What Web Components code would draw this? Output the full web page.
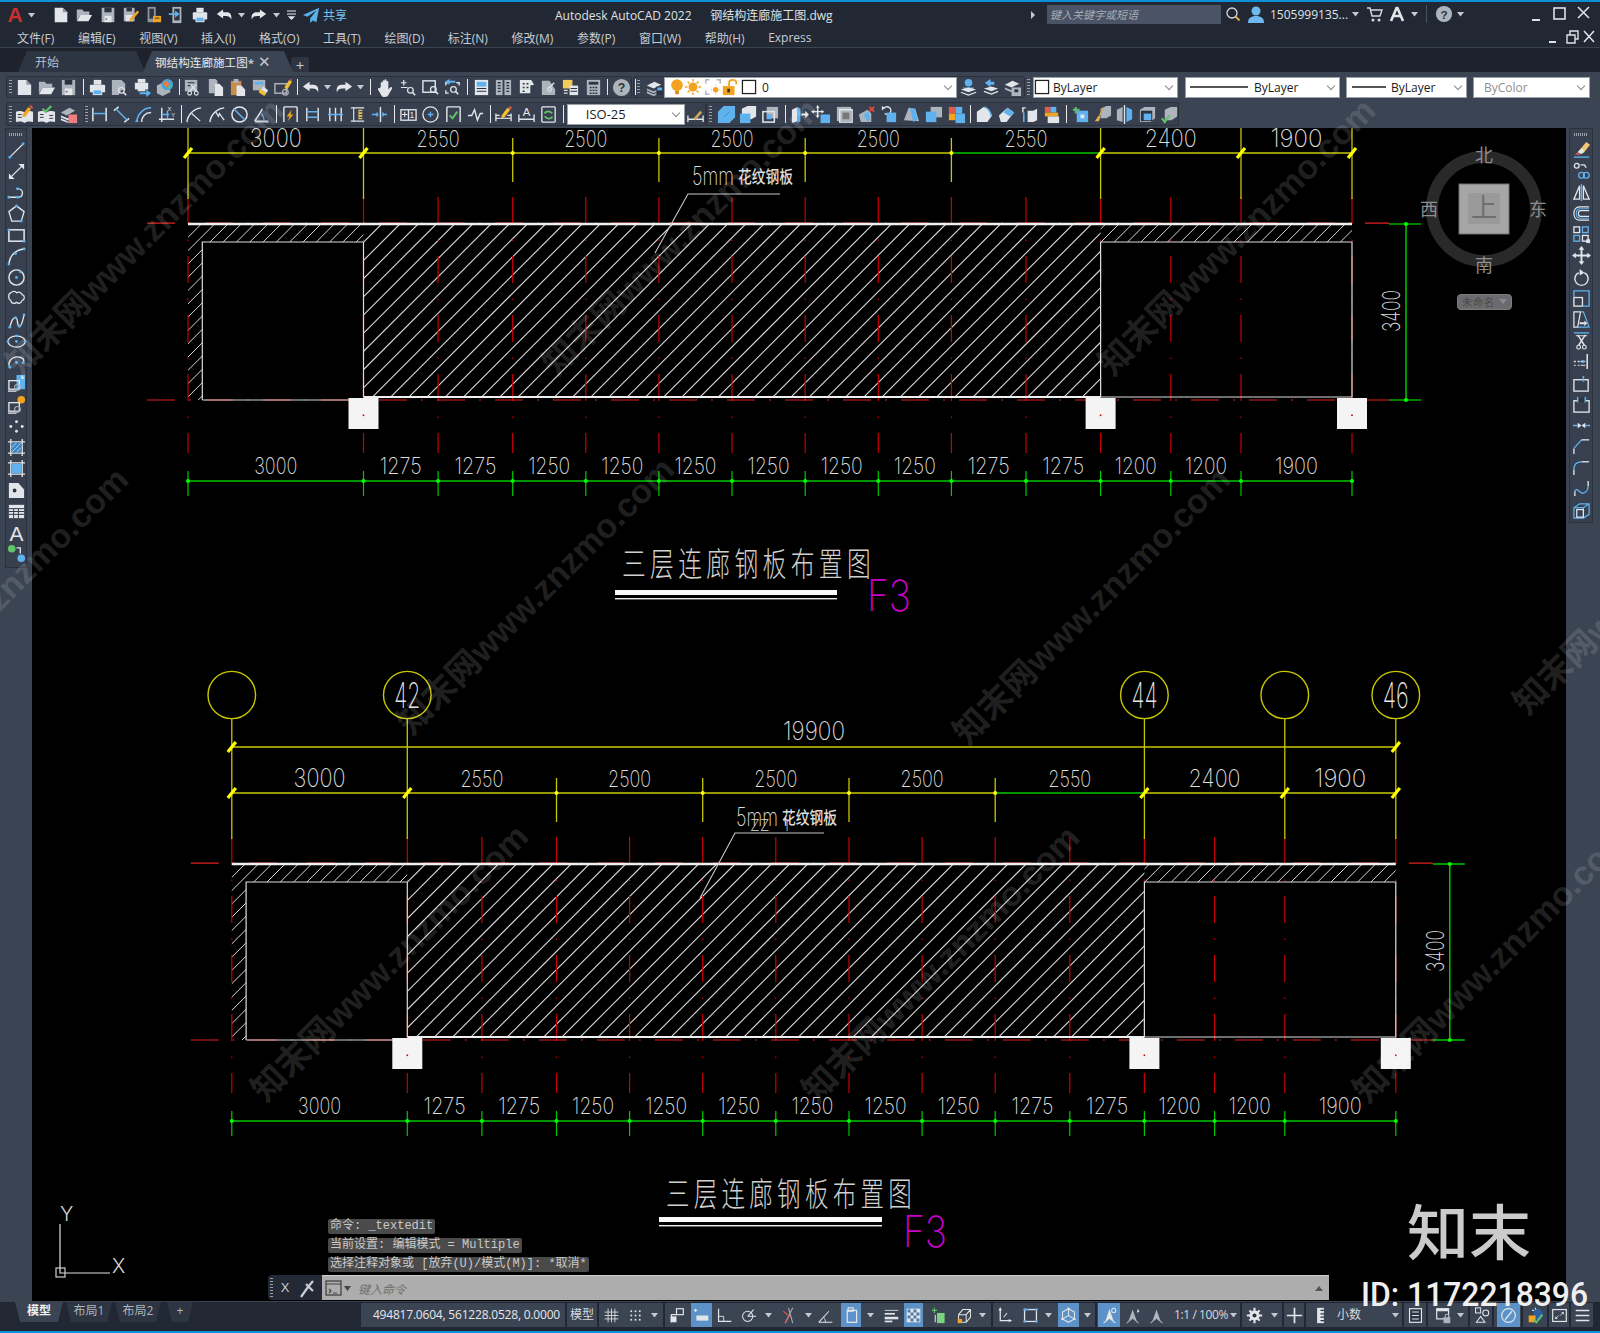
<!DOCTYPE html>
<html lang="zh">
<head>
<meta charset="utf-8">
<title>Autodesk AutoCAD 2022</title>
<style>
  html, body { margin: 0; padding: 0; background: #000; }
  body { width: 1600px; height: 1333px; overflow: hidden; position: relative; display: flex; flex-direction: column; font-family: "Open Sans", "Noto Sans CJK SC", sans-serif; }
</style>
</head>
<body>
<cad-titlebar></cad-titlebar>
<cad-menubar></cad-menubar>
<cad-doctabs></cad-doctabs>
<cad-toolrows></cad-toolrows>
<cad-workspace>
  <cad-vbar slot="left" side="left"></cad-vbar>
  <cad-canvas slot="main">
    <cad-viewcube></cad-viewcube>
    <cad-cmdline></cad-cmdline>
  </cad-canvas>
  <cad-vbar slot="right" side="right"></cad-vbar>
</cad-workspace>
<cad-statusbar></cad-statusbar>
<cad-overlay></cad-overlay>

<script>
// colours used by the toolbar icons
const W = '#e2e5e9', G = '#aeb4bc', B = '#5fb2ee', O = '#f2a31f', K = '#2b3240', R = '#e05a4e', V = '#5fc46a';
const s = (d, c = W, w = 1.4) => `<path d="${d}" fill="none" stroke="${c}" stroke-width="${w}"/>`;
const f = (d, c = W) => `<path d="${d}" fill="${c}"/>`;
const rc = (x, y, w, h, c = W) => `<rect x="${x}" y="${y}" width="${w}" height="${h}" fill="${c}"/>`;
const ro = (x, y, w, h, c = W, t = 1.4) => `<rect x="${x}" y="${y}" width="${w}" height="${h}" fill="none" stroke="${c}" stroke-width="${t}"/>`;
const ci = (x, y, r, c = W, t = 1.4) => `<circle cx="${x}" cy="${y}" r="${r}" fill="none" stroke="${c}" stroke-width="${t}"/>`;
const cf = (x, y, r, c = W) => `<circle cx="${x}" cy="${y}" r="${r}" fill="${c}"/>`;
const mag = (x, y) => ci(x, y, 3, W, 1.3) + s(`M${x + 2} ${y + 2}l3 3`, W, 1.6);
const page = (c = W) => f('M3 2h9l5 5v11H3z', c) + f('M12 2l5 5h-5z', '#8f959e');
const pts = (arr) => arr.map(p => cf(p[0], p[1], 1.5, B)).join('');

const ICONS = {
  new: page(),
  open: f('M2 4h6l2 2h6v4H6l-4 6z', G) + f('M6 10h13l-4 7H2z', W),
  save: rc(3, 2, 14, 16, G) + rc(6, 2, 8, 5, K) + rc(6, 11, 8, 7, W) + rc(7, 14, 2, 1, K),
  saveas: rc(2, 2, 12, 15, G) + rc(5, 2, 6, 4, K) + rc(4, 10, 8, 7, W) + f('M17 5l2 2-8 9-3 1 1-3z', O),
  sheet: rc(4, 1, 9, 17, '#8f959e') + rc(6, 3, 5, 11, K) + rc(10, 11, 9, 7, O) + rc(12, 13, 5, 1, K),
  xfer: rc(6, 1, 10, 18, G) + rc(8, 3, 6, 13, K) + f('M2 8h7V5l5 4-5 4v-3H2z', B),
  print: rc(6, 2, 8, 5, W) + f('M3 7h14a1 1 0 0 1 1 1v7H2V8a1 1 0 0 1 1-1z', W) + rc(5, 12, 10, 6, W) + rc(6, 13, 8, 4, B),
  preview: f('M2 2h10l4 4v7H12l-3 5H2z', G) + mag(12, 13),
  plot: rc(5, 1, 8, 4, W) + rc(2, 5, 14, 7, W) + rc(5, 10, 8, 4, W) + f('M7 15h7v-3l5 4-5 4v-3H7z', B),
  globe: f('M2 8l8-4 6 3v8l-8 4-6-3z', G) + cf(13, 7, 6, '#46a6d8') + f('M10 3c3 0 5 2 5 4l-3 3-3-3z', '#e57c4a') + f('M13 9l4-1-2 4z', V),
  cut: rc(2, 2, 13, 12, G) + s('M5 5h7M5 8h4', K, 1.2) + ci(7, 16, 2, W, 1.2) + ci(14, 16, 2, W, 1.2) + s('M7 14l7-7M14 14L8 7', W, 1.4),
  copy: f('M3 1h7l2 2v4H9v9H3z', G) + f('M9 6h5l4 4v9H9z', W),
  paste: rc(3, 3, 11, 15, '#c78d4c') + rc(6, 1, 5, 4, G) + f('M9 8h5l4 4v7H9z', W),
  match: rc(2, 2, 13, 11, G) + rc(4, 4, 9, 3, B) + f('M10 11l6 5-2 3-6-4z', '#f1c12f') + f('M13 9l5 4-2 3-5-4z', W),
  mgr: ro(2, 6, 12, 10, G, 1.5) + f('M12 10l5-8 3 2-5 8z', '#f1c12f') + f('M17 2l2-1 1 3z', R) + ci(13, 15, 3, G),
  undo: f('M2 9l7-5v3h4c4 0 6 3 5 8-1-3-3-4-6-4H9v3z', W),
  redo: f('M18 9l-7-5v3H7c-4 0-6 3-5 8 1-3 3-4 6-4h3v3z', W),
  pan: f('M5 9V5c0-1 2-1 2 0v4-6c0-1 2-1 2 0v6-7c0-1 2-1 2 0v7-5c0-1 2-1 2 0v8l2-2c1-1 2 0 2 1l-4 7c-1 2-2 2-4 2H9c-2 0-3-1-4-3l-3-5c0-1 1-2 2-1z', W),
  zoomrt: s('M5 2v6M2 5h6M2 10h7', W, 1.3) + mag(12, 13),
  zoomwin: ro(2, 3, 13, 12, W, 1.5) + mag(13, 12),
  zoomprv: s('M3 8V5h3M14 5h3v3M3 13v3h3', W, 1.4) + f('M2 4l5-3v2h6v2H7v2z', B) + mag(11, 12),
  props: rc(3, 2, 14, 16, W) + rc(5, 4, 10, 5, B) + s('M5 11h10M5 14h10', K, 1.2),
  dc: rc(2, 2, 7, 16, G) + rc(11, 2, 7, 16, G) + s('M4 5h3M4 8h3M4 11h3M4 14h3M13 5h3M13 8h3M13 11h3M13 14h3', K, 1.4),
  tools: f('M3 2h12l3 5-4 1v8H3z', W) + s('M6 6h2M10 6h2M6 10h2M10 10h2M6 14h2', K, 1.6),
  sheets: f('M3 3h8l6 9v6H3z', G) + ci(11, 12, 2, W, 1.2) + s('M11 10l5-5', W),
  markup: rc(2, 2, 10, 9, '#f3cb58') + rc(9, 8, 9, 10, W) + s('M10 11h7M10 14h7', K, 1.2) + s('M3 13h4M3 16h4', W, 1.4),
  calc: rc(3, 2, 14, 16, G) + rc(5, 4, 10, 3, K) + s('M6 10h2M9 10h2M12 10h2M6 13h2M9 13h2M12 13h2M6 16h2M9 16h2M12 16h2', K, 1.5),
  help: cf(10, 10, 9, G) + `<text x="10" y="15" font-size="13" font-weight="700" text-anchor="middle" fill="${K}" font-family="Liberation Sans">?</text>`,
  layers: f('M2 8l8-4 7 3-8 4z', W) + f('M2 11l7 3 8-3v2l-8 3-7-3z', G) + f('M2 14l7 3 8-3v2l-8 3-7-3z', G) + rc(12, 9, 7, 9, K) + rc(13, 10, 5, 3, B),
  bulb: cf(10, 8, 6.5, O) + rc(8, 14, 4, 4, '#d88a12'),
  sun: cf(10, 10, 5, O) + s('M10 1v3M10 16v3M1 10h3M16 10h3M4 4l2 2M14 14l2 2M16 4l-2 2M4 16l2-2', O, 1.6),
  vpfrz: s('M2 6V2h4M14 2h4v4M2 14v4h4', G, 1.6) + cf(13, 13, 3, O) + s('M13 8v1M13 17v1M8 13h1M17 13h1', O, 1.2),
  lock: rc(2, 9, 13, 10, O) + s('M9 9V5c0-4 8-4 8 0v2', O, 2) + rc(7, 12, 3, 4, K),
  swatch: rc(2, 2, 16, 16, '#fff') + ro(2.7, 2.7, 14.6, 14.6, '#222', 1.4),
  layuser: cf(10, 5, 4, B) + f('M4 10h12l-2 3H6z', B) + f('M2 12l8 3 8-3-8-2z', W) + s('M2 15l8 3 8-3', W),
  layprev: f('M4 5l6-4v3h4v3h-4v3z', B) + f('M3 11l8 3 7-3-7-2z', W) + s('M3 14l8 3 7-3', W),
  laylock: f('M2 7l8-4 7 3-8 4z', W) + f('M2 10l7 3 8-3v2l-8 3-7-3z', G) + rc(9, 10, 10, 9, G) + rc(12, 12, 4, 3, K),
  annot: f('M1 7c3-1 6-1 9 1 3-2 6-2 9-1v11c-3-1-6-1-9 1-3-2-6-2-9-1z', W) + f('M8 10l6-8 3 2-6 8-3 1z', O) + f('M15 1l2-1 2 3-1 1z', R) + s('M3 10h4M3 13h4', K, 1),
  bookchk: f('M1 7c3-1 6-1 9 1 3-2 6-2 9-1v11c-3-1-6-1-9 1-3-2-6-2-9-1z', W) + s('M3 10h4M3 13h4M13 11h4M13 14h4', K, 1) + s('M6 4l3 3 6-6', V, 2.2),
  stackr: f('M2 8l9-5 6 3-9 5z', G) + f('M2 11l7 3 4-2v2l-4 2-7-3z', W) + rc(10, 10, 9, 9, '#f08080') + f('M2 14l7 3 1 2-8-3z', W),
  dimlin: s('M3 3v14M17 3v14', W, 1.6) + s('M3 9h14', B, 1.6),
  dimali: s('M2 6l5-4M13 18l5-4', W, 1.6) + s('M4 4l12 12', B, 1.6),
  dimarc: s('M3 18C3 10 10 3 18 3', B, 1.6) + s('M8 18C8 12 12 8 18 8', W, 1.6) + f('M1 18h4l-2-3z', B),
  dimord: s('M5 3v15M2 15h16', W, 1.5) + s('M11 6v9M5 10h8', B, 1.5) + `<text x="11" y="6" font-size="6" fill="${W}" font-family="Liberation Sans">X</text><text x="15" y="13" font-size="6" fill="${W}" font-family="Liberation Sans">Y</text>`,
  dimrad: s('M2 18C3 10 9 4 17 3', W, 1.5) + s('M7 9l9 8', W, 1.3),
  dimjog: s('M2 18C3 10 9 4 17 3', W, 1.5) + s('M8 7l3 5 1-3 5 7', W, 1.3),
  dimdia: ci(10, 10, 8, W, 1.6) + s('M4 4l12 12', B, 1.6),
  dimang: s('M3 17h14M3 17L11 4', W, 1.4) + s('M13 17c0-3-1-5-3-8', B, 1.4) + s('M3 18h15', W, .8),
  dimbrk: s('M3 2h14M3 2v16M17 2v16', W, 1.5) + f('M11 5L6 12h3l-2 5 6-7h-3z', O),
  dimbase: s('M4 3v14M16 3v14', W, 1.5) + s('M4 7h12M4 13h12', B, 1.6),
  dimcont: s('M4 3v14M10 3v14M16 3v14', W, 1.5) + s('M2 10h16', B, 1.6),
  dimspc: s('M3 3h14M3 17h14', W, 1.5) + s('M6 3v14', W, 1.2) + rc(11, 5, 4, 10, '#e8c063') + s('M12 7h3M12 10h3M12 13h3', K, 1),
  dimbk2: s('M11 2v16', W, 1.5) + s('M2 10h7M13 10h5', B, 1.6) + f('M8 7v6l-3-3zM13 7v6l3-3z', B),
  tol: ro(2, 5, 16, 11, W, 1.4) + s('M10 5v11', W) + s('M3 10h6M6 7v6', W, 1.2) + `<text x="11" y="14" font-size="9" fill="${W}" font-family="Liberation Sans">1</text>`,
  cent: ci(10, 10, 8, W, 1.4) + s('M7 10h6M10 7v6', B, 1.4),
  insp: s('M3 2h14M3 2v16M17 2v16', W, 1.5) + s('M6 11l3 3 5-7', V, 2),
  jogl: s('M2 11h4l3-6 3 11 3-7h3', W, 1.5),
  ded: s('M2 11h4M14 11h4M2 9v8M18 9v8', W, 1.4) + f('M8 11l6-8 3 2-6 8-3 1z', '#f1c12f') + f('M15 3l2-2 2 2-2 2z', R) + s('M2 14h16', W, 1.2),
  dimtxt: s('M2 10v8M18 10v8M2 15h16', W, 1.4) + `<text x="10" y="12" font-size="12" text-anchor="middle" fill="${W}" font-family="Liberation Sans">A</text>`,
  dimupd: s('M3 2h14M3 2v16M17 2v16M3 18h14', W, 1.4) + s('M6 9c1-3 6-3 8 0M14 12c-1 3-6 3-8 0', V, 1.8),
  dimsty: s('M2 11v7M18 11v7M2 15h16', W, 1.4) + f('M8 14L15 6l2 2-7 8z', '#d0a35c'),
  sol1: f('M1 7l6-6h12v12l-6 6H1z', B) + s('M7 13l6-6', '#3a8fc9', 1),
  sol2: f('M3 4l6-3h9v11l-5 3H3z', W) + f('M1 9h11v10H1z', B),
  sol3: f('M6 2h12v12H6z', G) + ro(2, 7, 12, 11, W, 1.6) + rc(6, 10, 5, 5, B),
  ext: f('M2 5l6-3v15l-6 2z', W) + f('M8 2l3 2v13l-3 2z', B) + f('M12 9h4V6l4 4-4 4v-3h-4z', W),
  movef: s('M6 2v10M1 7h10', W, 1.5) + f('M6 0l2 3H4zM6 14l2-3H4zM-1 7l3-2v4zM13 7l-3-2v4z', W) + rc(9, 10, 10, 9, B),
  offf: rc(2, 2, 15, 15, G) + ro(5, 5, 13, 13, W, 1.6) + rc(8, 8, 7, 7, '#777'),
  delf: f('M2 10l9-5 4 4v9H4z', G) + f('M7 10l5-3 2 8-3 3z', B) + s('M13 2l5 5M18 2l-5 5', '#e24b3f', 2),
  rotf: s('M5 4a4 4 0 1 1 1 5', W, 1.4) + f('M3 1l3 2-3 3z', W) + rc(8, 8, 10, 10, B),
  taper: f('M2 16L7 3l7 1 4 13z', G) + f('M8 3l5 1 4 11-5 3z', B),
  copyf: f('M7 2h12v11H7z', G) + f('M2 7h11v11H2z', B),
  colf: rc(2, 2, 7, 7, R) + rc(9, 2, 7, 7, B) + rc(2, 9, 7, 7, O) + rc(9, 9, 10, 10, B),
  sec1: f('M2 7l7-5 5 2 4 7-5 7H2z', W) + s('M10 2c5 2 7 7 7 10', B, 1.6),
  sec2: f('M2 11L11 3l7 5-8 10H4z', W) + f('M11 3l7 5-4 4-7-4z', B),
  imp: s('M3 8V3h3', W, 1.5) + s('M4 8v10', B, 1.6) + f('M8 6h6l4-2v12l-4 2H8z', W),
  col2: rc(3, 2, 6, 6, R) + rc(9, 2, 6, 6, B) + rc(3, 8, 14, 4, O) + rc(6, 12, 12, 7, W),
  imprint: s('M5 2v7M2 5h7', V, 2) + rc(6, 6, 12, 12, B) + rc(10, 10, 4, 4, W),
  clean: f('M8 4l6-3h5v10l-5 3H8z', G) + f('M6 11l2 1-2 5h-4z', '#e6b34c') + s('M7 11l4-8', '#d0a35c', 1.6),
  sep: f('M2 5l6-3v16l-6-2z', G) + f('M12 2l6 3v10l-6 3z', B) + s('M10 0v20', W),
  shell: f('M2 5l5-3h11v12l-5 4H2z', G) + rc(3, 6, 12, 11, K) + rc(6, 9, 8, 7, B),
  check: f('M5 5l6-3h7v10l-6 4H5z', G) + s('M2 14l3 4 5-7', V, 2.2),
  // left bar
  line: s('M3 17L17 3', W) + pts([[3, 17], [17, 3]]),
  xline: s('M3 17L17 3', W) + f('M18 2v6l-6-6zM2 18v-6l6 6z', W),
  pline: s('M2 15h9c7 0 7-9 0-9', W) + pts([[2, 15], [11, 15], [11, 6]]),
  poly: s('M10 2l8 6-3 10H5L2 8z', W) + pts([[10, 2], [15, 18]]),
  rect: ro(2, 4, 16, 12, W, 1.6) + pts([[2, 4], [18, 16]]),
  arc: s('M2 18C3 9 9 3 18 2', W, 1.6) + pts([[2, 18], [9, 7], [18, 2]]),
  circle: ci(10, 10, 8, W, 1.5) + pts([[10, 10], [14, 4]]),
  cloud: s('M4 4c2-2 5-2 6 0 2-1 5-1 6 2 3 1 3 5 0 6-1 3-4 4-6 2-2 2-6 1-6-2-3-1-3-7 0-8z', W, 1.3),
  spline: s('M3 17c2-7 3-10 6-10s1 9 4 9 4-9 5-12', W) + pts([[3, 17], [9, 7], [13, 16], [18, 4]]),
  ellipse: `<ellipse cx="10" cy="10" rx="9" ry="6" fill="none" stroke="${W}" stroke-width="1.4"/>` + pts([[10, 4], [19, 10], [1, 10], [10, 10]]),
  ellarc: s('M3 15c-3-5 2-11 8-11 5 0 8 3 6 6', W) + pts([[3, 15], [10, 10], [17, 10]]),
  insert: rc(10, 1, 9, 15, B) + f('M15 1l4 4h-4z', W) + ro(2, 7, 11, 9, W, 1.4) + ci(11, 14, 3, G, 1.2) + s('M1 18h9', W),
  block: cf(15, 4, 4, O) + ro(2, 7, 11, 9, W, 1.4) + ci(11, 14, 3, G, 1.2) + s('M1 18h9', W),
  point: cf(10, 5, 1.5, W) + cf(4, 10, 1.5, W) + cf(16, 10, 1.5, W) + cf(10, 15, 1.5, W),
  hatch: s('M4 1v18M16 1v18M1 4h18M1 16h18', W, 1.4) + rc(5, 5, 10, 10, '#3f86c0') + s('M5 10l5-5M5 15l10-10M10 15l5-5', '#9fd3f8', 1),
  grad: s('M4 1v18M16 1v18M1 4h18M1 16h18', W, 1.4) + rc(5, 5, 10, 10, B),
  region: f('M2 2h10l6 7v9H2z', W) + cf(8, 10, 2, K),
  table: rc(2, 3, 16, 14, W) + s('M2 7h16M2 10h16M2 13h16M7 7v10M12 7v10', K, 1),
  atext: `<text x="10" y="19" font-size="22" text-anchor="middle" fill="${W}" font-family="Liberation Sans">A</text>`,
  addsel: cf(5, 5, 4, V) + cf(15, 15, 4, B) + s('M10 4h4v6', W, 1.4),
  // right bar
  erase: f('M6 13l9-11 4 3-7 9z', '#f0c27a') + f('M6 13l4-4 3 2-3 4z', W) + f('M3 15l3-2 3 3z', R) + s('M2 18h16', B, 1.4),
  copyo: ci(5, 4, 2.5, W) + s('M9 3h4l2 3', W) + ci(10, 14, 3, B) + ci(15, 14, 3, B),
  mirror: s('M10 1v18', B, 1.4) + s('M8 3v14H2z', W) + s('M12 3v14h6z', W),
  offset: s('M18 3H8c-8 0-8 14 0 14h10M18 7H9c-3 0-3 6 0 6h9', W, 1.3) + s('M18 5H9c-6 0-6 10 0 10h9', B, 1.3),
  array: ro(2, 2, 6, 6, W) + ro(11, 2, 6, 6, B) + ro(2, 11, 6, 6, B) + ro(11, 11, 6, 6, W) + rc(15, 15, 4, 4, W),
  move: s('M10 2v16M2 10h16', W, 2) + f('M10 0l3 4H7zM10 20l3-4H7zM0 10l4-3v6zM20 10l-4-3v6z', W),
  rotate: s('M13 5a7 7 0 1 1-6 0', W, 1.5) + f('M8 1l5 4-5 3z', W),
  scale: ro(2, 9, 9, 9, W, 1.4) + s('M2 9V2h16v16h-7', B, 1.4),
  stretch: s('M2 18V2h7l-3 16z', W, 1.3) + s('M9 2h3l6 16H6', B, 1.3) + f('M8 13h5v-2l3 3-3 3v-2H8z', W),
  trim: s('M2 2h16', B, 1.4) + s('M4 5h12', W, 1) + ci(7, 17, 2, W, 1.2) + ci(13, 17, 2, W, 1.2) + s('M7 15l7-11M13 15L6 4', W, 1.5),
  extend: s('M16 2v16', W, 1.6) + s('M2 10h2M6 10h2M9 10h5', W, 1.4) + s('M2 14h2M6 14h2M9 14h5', W, 1) + f('M14 10l-3-2v4z', B),
  breakp: ro(2, 6, 15, 12, W, 1.4) + s('M12 2v6', B, 1.6),
  breakt: ro(2, 6, 16, 12, W, 1.4) + rc(6, 3, 8, 5, K) + s('M6 2v6M14 2v6', B, 1.6),
  join: s('M1 10h5M14 10h5', B, 1.4) + f('M6 7l4 3-4 3zM14 7l-4 3 4 3z', W),
  chamfer: s('M2 18v-6', W, 1.4) + s('M2 12L10 3', B, 1.4) + s('M10 3h8', W, 1.4),
  fillet: s('M2 18v-6', W, 1.4) + s('M2 12c0-5 3-8 8-8', B, 1.4) + s('M10 4h8', W, 1.4),
  blend: s('M3 18v-5M17 2v6', W, 1.4) + s('M3 13c2-5 5 2 8 2s6-3 6-7', B, 1.4),
  explode: s('M2 7l6-4h10v11l-6 4H2zM2 7h10v11M12 7l6-4', B, 1.3) + ro(5, 9, 7, 8, W, 1.3),
  // quick access / status
  list: s('M4 4h12', W, 1.4) + s('M4 8h12', W, 1.4) + f('M5 11h10l-5 5z', W),
  share: f('M19 2L1 10l5 2 10-7-7 9v5l3-3 4 2z', '#5ab0e8'),
  grid: s('M2 6h16M2 10h16M2 14h16M6 2v16M10 2v16M14 2v16', W, 1),
  snap: '<g fill="' + W + '">' + [5, 10, 15].map(y => [5, 10, 15].map(x => `<rect x="${x - 1}" y="${y - 1}" width="2" height="2"/>`).join('')).join('') + '</g>',
  infer: ro(10, 2, 8, 7, W, 1.4) + s('M10 9H4v9', W, 1.4) + rc(3, 11, 7, 7, W),
  dyn: s('M3 2v4M1 4h4', W, 1.3) + rc(4, 10, 14, 6, W),
  ortho: s('M3 2v15h15', W, 1.4) + s('M3 11h6v6', W, 1),
  polar: ci(9, 11, 6, W, 1.2) + s('M9 11h10M9 11l7-8', W, 1.2),
  osnap: s('M10 1l5 18M15 1L6 19', G, 1.2) + s('M4 5l7 6-5 8', R, 1.2),
  angle: s('M2 18h16M2 18L14 5', W, 1.2) + s('M10 18c0-2-1-4-2-6', W, 1),
  ucsbox: ro(6, 1, 6, 4, W, 1.3) + ro(5, 4, 11, 14, W, 1.5),
  lwt: s('M2 4h16', W, 1) + s('M2 8h12', W, 2) + s('M2 13h16', W, 3) + s('M2 17h9', W, 2),
  transp: rc(2, 2, 16, 16, W) + [0, 1, 2, 3].map(r => [0, 1, 2, 3].map(c => (r + c) % 2 ? '' : `<rect x="${3 + c * 3.5}" y="${3 + r * 3.5}" width="3.5" height="3.5" fill="#4f79a8"/>`).join('')).join(''),
  qsel: rc(7, 7, 9, 12, '#7bd17f') + s('M4 1v6M1 4h6', V, 1.3) + s('M5 9v9', W, 1.2),
  selcyc: s('M3 9l5-6h9v9l-5 6H3zM3 9h9v9M12 9l5-6', W, 1.2) + rc(2, 14, 5, 5, O),
  ucsmove: s('M5 2v14h12', W, 1.5) + f('M5 0l2 4H3zM19 16l-4 2v-4z', W) + s('M9 12l4-5', W, 1.2),
  gizmo: ro(3, 3, 14, 14, W, 1.5) + pts([[3, 3], [17, 3], [3, 17], [17, 17]]) + s('M3 3h5', B, 2),
  cube3: s('M10 2l7 4v8l-7 4-7-4V6z', W, 1.2) + s('M3 14l7-4 7 4M10 2v8', W, 1.2) + cf(10, 2, 1.5) + cf(3, 14, 1.5) + cf(17, 14, 1.5),
  anno: f('M10 2l5 15-5-4-5 4z', W) + s('M3 19l7-6 7 6', W, 1.3) + ci(15, 4, 2.4, W, 1.2),
  anno2: f('M9 3l5 14-5-4-5 4z', G) + s('M2 19l7-6 7 6', G, 1.2) + f('M15 2l2 3-3 2z', W),
  anno3: f('M10 3l5 14-5-4-5 4z', G) + s('M3 19l7-6 7 6', G, 1.2),
  gear: cf(10, 10, 6, W) + cf(10, 10, 2.4, K) + s('M10 1v4M10 15v4M1 10h4M15 10h4M4 4l3 3M13 13l3 3M16 4l-3 3M4 16l3-3', W, 2.4),
  plus: s('M10 1v18M1 10h18', W, 2),
  ruler: rc(6, 1, 8, 18, W) + s('M10 4h4M10 8h4M10 12h4M10 16h4', K, 1.4),
  qprop: rc(3, 2, 14, 16, K) + ro(3, 2, 14, 16, W, 1.4) + s('M6 6h8M6 10h8M6 14h8', W, 1.2),
  lockui: ro(2, 2, 14, 12, W, 1.4) + rc(2, 2, 14, 3, W) + rc(10, 12, 8, 7, G) + s('M12 12v-2c0-2 4-2 4 0v2', G, 1.2),
  isolate: ro(3, 1, 6, 6, W, 1.2) + ci(15, 7, 3.5, W, 1.2) + s('M9 11l5 7H4z', W, 1.2),
  hwacc: ci(10, 10, 8, W, 1.4) + s('M6 15l8-10', W, 1.6),
  clean2: s('M10 1v6M6 4h8', W, 1.3) + f('M8 3h8l3 5-2 7H8z', '#2d5fa0') + rc(2, 10, 8, 8, O) + s('M8 15l3 3 7-9', V, 2.2),
  fullsc: ro(2, 3, 16, 14, W, 1.4) + f('M5 11v3h3zM15 9V6h-3z', W) + s('M6 13l3-3M14 7l-3 3', W, 1),
  menu: s('M2 4h16M2 10h16M2 16h16', W, 1.8),
};

// builds one icon cell, size is the drawn size and width is the cell
const icon = (name, width = 22.4, size = 19, ml = 0) =>
  `<span class="i" style="width:${width}px;margin-left:${ml}px"><svg width="${size}" height="${size}" viewBox="0 0 20 20">${ICONS[name] || ''}</svg></span>`;
const dd = (width = 11) => `<span class="i" style="width:${width}px"><svg width="7" height="5" viewBox="0 0 7 5"><path d="M0 0h7L3.5 4.5z" fill="#c5cad1"/></svg></span>`;
const sep = (width = 6) => `<span class="s" style="width:${width}px"></span>`;
const handle = (width = 12) => `<span class="h" style="width:${width}px"></span>`;

const ICON_CSS = `
  .i { display: inline-flex; align-items: center; justify-content: center; flex: none; height: 100%; }
  .i svg { display: block; overflow: visible; flex: none; }
  .s { flex: none; height: 100%; position: relative; display: block; }
  .s::after { content: ""; position: absolute; left: 50%; top: 2px; bottom: 2px; width: 1px; background: #e6e8ea; }
  .h { flex: none; height: 100%; position: relative; display: block; }
  .h::after { content: ""; position: absolute; left: calc(50% - 2px); top: 3px; bottom: 3px; width: 3px; background: repeating-linear-gradient(#9aa1ab 0 1px, transparent 1px 3px); }
`;

class CadEl extends HTMLElement {
  constructor() {
    super();
    this.attachShadow({ mode: 'open' });
  }
}

class CadTitlebar extends CadEl {
  connectedCallback() {
    this.shadowRoot.innerHTML = `
      <style>
        ${ICON_CSS}
        :host { display: flex; height: 26px; flex: none; background: #222833; border-top: 2px solid #0b8fd8; align-items: center; color: #dfe2e6; font-size: 12px; position: relative; }
        .logo { width: 24px; margin-left: 3px; text-align: center; font: 700 21px "Liberation Sans", sans-serif; color: #c9302c; }
        .qa { display: flex; height: 20px; align-items: center; margin-left: 0; }
        .share { color: #7cc2f0; margin-left: 3px; font-size: 12px; }
        .title { position: absolute; left: 555px; top: 4px; letter-spacing: 0; white-space: pre; }
        .right { position: absolute; left: 1028px; right: 0; top: 0; height: 24px; display: flex; align-items: center; }
        .search { width: 174px; height: 19px; margin-left: 12px; background: #4a5466; color: #a7adb6; font-size: 11px; font-style: italic; line-height: 19px; padding-left: 3px; box-sizing: border-box; }
        .arrow { width: 0; height: 0; border-left: 4px solid #c5cad1; border-top: 4px solid transparent; border-bottom: 4px solid transparent; margin-left: 3px; margin-top: 1px; }
        .user { margin-left: 3px; white-space: nowrap; }
        .bar { width: 1px; height: 18px; background: #4a5260; margin: 0 6px; }
        .win { position: absolute; left: 1522px; top: 0; height: 24px; display: flex; align-items: center; }
      </style>
      <span class="logo">A</span>
      ${dd(9)}
      <span class="qa" style="margin-left:13px">
        ${icon('new', 23, 18)}${icon('open', 24, 18)}${icon('save', 23, 18)}${icon('saveas', 23, 18)}${icon('sheet', 22, 18)}${icon('xfer', 24, 18)}${icon('print', 24, 18)}${icon('undo', 24, 18)}${dd(10)}${icon('redo', 26, 18)}${dd(8)}${icon('list', 22, 15)}${icon('share', 18, 18)}
      </span>
      <span class="share">共享</span>
      <span class="title">Autodesk AutoCAD 2022      钢结构连廊施工图.dwg</span>
      <div class="right">
        <span class="arrow"></span>
        <span class="search">键入关键字或短语</span>
        <span class="i" style="width:24px"><svg width="16" height="16" viewBox="0 0 16 16"><circle cx="7" cy="7" r="5" fill="none" stroke="#d5d9de" stroke-width="1.3"/><path d="M10.5 10.5l4 4" stroke="#e8b04a" stroke-width="1.8"/></svg></span>
        <span class="i" style="width:22px"><svg width="16" height="17" viewBox="0 0 16 17"><circle cx="8" cy="5" r="4.5" fill="#6db9ee"/><path d="M0 17c0-5 3-7 8-7s8 2 8 7z" fill="#6db9ee"/></svg></span>
        <span class="user">1505999135...</span>
        ${dd(14)}
        <span class="i" style="width:24px"><svg width="15" height="15" viewBox="0 0 15 15"><path d="M0 1h3l2 8h8l2-6H4" fill="none" stroke="#d5d9de" stroke-width="1.4"/><circle cx="6" cy="13" r="1.5" fill="#d5d9de"/><circle cx="12" cy="13" r="1.5" fill="#d5d9de"/></svg></span>
        <span class="i" style="width:22px"><svg width="16" height="17" viewBox="0 0 16 17"><path d="M8 1L2 15M8 1l6 14M4 10h8" fill="none" stroke="#e2e5e9" stroke-width="2.6"/></svg></span>
        ${dd(12)}
        <span class="bar"></span>
        ${icon('help', 22, 18)}${dd(10)}
      </div>
      <div class="win">
        <svg width="70" height="20" viewBox="0 0 70 20"><path d="M10 16h8" stroke="#dfe2e6" stroke-width="2"/><rect x="32" y="4" width="11" height="11" fill="none" stroke="#dfe2e6" stroke-width="1.6"/><path d="M56 3l11 11M67 3L56 14" stroke="#e2e5e9" stroke-width="1.5"/></svg>
      </div>`;
  }
}

class CadMenubar extends CadEl {
  connectedCallback() {
    const items = ['文件(F)', '编辑(E)', '视图(V)', '插入(I)', '格式(O)', '工具(T)', '绘图(D)', '标注(N)', '修改(M)', '参数(P)', '窗口(W)', '帮助(H)', 'Express'];
    this.shadowRoot.innerHTML = `
      <style>
        :host { display: flex; height: 20px; flex: none; background: #222833; color: #c7ccd3; font-size: 12px; align-items: center; padding-left: 17px; gap: 23.6px; position: relative; border-bottom: 1px solid #3a4250; box-sizing: border-box; }
        span { white-space: nowrap; }
        svg { position: absolute; left: 1543px; top: 0; }
      </style>
      ${items.map(m => `<span>${m}</span>`).join('')}
      <svg width="54" height="18" viewBox="0 0 54 18"><path d="M6 14h7" stroke="#dfe2e6" stroke-width="2"/><path d="M24 7h8v8h-8zM27 7V3h8v8h-3" fill="none" stroke="#dfe2e6" stroke-width="1.4"/><path d="M41 3l10 11M51 3L41 14" stroke="#e2e5e9" stroke-width="1.5"/></svg>`;
  }
}

class CadDoctabs extends CadEl {
  connectedCallback() {
    this.shadowRoot.innerHTML = `
      <style>
        :host { display: flex; height: 24px; flex: none; background: #1d222c; color: #b9bec6; font-size: 12px; align-items: flex-end; padding-left: 18px; box-sizing: border-box; }
        .t { height: 21px; display: flex; align-items: center; box-sizing: border-box; clip-path: polygon(9px 0, calc(100% - 9px) 0, 100% 100%, 0 100%); }
        .a { width: 127px; background: #2d3442; padding-left: 17px; }
        .b { width: 150px; background: #3b4453; color: #e6e8eb; padding-left: 12px; margin-left: -2px; font-size: 11.6px; }
        .x { margin-left: 4px; color: #c5cad1; font: 15px "Liberation Sans", sans-serif; }
        .p { width: 18px; background: #2d3442; justify-content: center; margin-left: -2px; color: #c5cad1; font-size: 15px; height: 15px; clip-path: none; border-radius: 3px 3px 0 0; }
      </style>
      <div class="t a">开始</div>
      <div class="t b">钢结构连廊施工图*<span class="x">✕</span></div>
      <div class="t p">+</div>`;
  }
}

class CadToolrows extends CadEl {
  connectedCallback() {
    const row = (names) => names.split(' ').map(n => n === '|' ? sep() : n === 'v' ? dd(11) : n === '::' ? handle() : icon(n)).join('');
    this.shadowRoot.innerHTML = `
      <style>
        ${ICON_CSS}
        :host { display: flex; flex-direction: column; flex: none; height: 56px; background: #3b4453; padding: 4px 0 0 0; box-sizing: border-box; color: #1c1c1c; font: 12px "Open Sans", "Noto Sans CJK SC", sans-serif; }
        .row { display: flex; height: 22px; align-items: stretch; padding-left: 6px; }
        .row.two { margin-top: 4px; height: 24px; }
        .g { display: flex; height: 100%; align-items: stretch; border: 1px solid #2a303c; border-radius: 2px; box-sizing: border-box; background: #384050; padding: 0 2px 0 0; flex: none; }
        .c { background: #fff; height: 21px; align-self: center; box-sizing: border-box; display: flex; align-items: center; position: relative; flex: none; border: 1px solid #9aa0a8; }
        .c::after { content: ""; position: absolute; right: 5px; top: 5px; width: 5px; height: 5px; border-right: 1px solid #888; border-bottom: 1px solid #888; transform: rotate(45deg); }
        .lay { width: 293px; }
        .gap { flex: none; width: 6px; }
        .ln { display: inline-block; height: 2px; background: #555; flex: none; }
      </style>
      <div class="row">
        <div class="g" style="width:626px;padding-left:1px;">
          ${handle(5)}${row('new open save | print preview plot globe | cut copy paste match mgr | undo v redo v')}${sep(8)}${row('pan zoomrt zoomwin zoomprv | props dc tools sheets markup calc | help')}${sep(5)}
        </div>
        <div class="gap" style="width:1px"></div>
        <div class="g" style="width:392px;">
          ${handle(10)}${icon('layers', 20)}
          <div class="c lay">${icon('bulb', 16, 18, 4)}${icon('sun', 16, 18)}${icon('vpfrz', 16, 18, 4)}${icon('lock', 16, 18, 1)}${icon('swatch', 16, 18, 3)}<span style="margin-left:5px">0</span></div>
          ${icon('layuser')}${icon('layprev')}${icon('laylock')}
        </div>
        <div class="g" style="width:153px;border:0;background:none;">
          ${handle(8)}
          <div class="c" style="width:145px;padding-left:0">${icon('swatch', 16, 18)}<span style="margin-left:3px">ByLayer</span></div>
        </div>
        <div class="gap" style="width:7px"></div>
        <div class="c" style="width:155px"><span class="ln" style="width:58px;margin:0 6px 0 4px"></span>ByLayer</div>
        <div class="gap"></div>
        <div class="c" style="width:121px"><span class="ln" style="width:34px;margin:0 5px"></span>ByLayer</div>
        <div class="gap"></div>
        <div class="c" style="width:117px;color:#8f8f8f;padding-left:10px">ByColor</div>
      </div>
      <div class="row two">
        <div class="g" style="width:79px;padding-left:1px">
          ${handle(5)}${row('annot bookchk stackr')}
        </div>
        <div class="g" style="width:621px;border-left:0">
          ${handle(3)}${row('dimlin dimali dimarc dimord | dimrad dimjog dimdia dimang | dimbrk dimbase dimcont dimspc dimbk2 | tol cent insp jogl | ded dimtxt dimupd |')}
          <div class="c" style="width:118px;padding-left:18px;font-size:13px;margin-left:1px">ISO-25</div>
          ${icon('dimsty', 22)}
        </div>
        <div class="g" style="width:473px;">
          ${handle(8)}${row('sol1 sol2 sol3 | ext movef offf delf rotf taper copyf colf | sec1 sec2 imp col2 | imprint clean sep shell check')}
        </div>
      </div>`;
  }
}

class CadWorkspace extends CadEl {
  connectedCallback() {
    this.shadowRoot.innerHTML = `
      <style>
        :host { display: flex; flex: none; height: 1173px; background: #000; }
        ::slotted([slot="main"]) { flex: 1; min-width: 0; }
      </style>
      <slot name="left"></slot><slot name="main"></slot><slot name="right"></slot>`;
  }
}

class CadVbar extends CadEl {
  connectedCallback() {
    const left = this.getAttribute('side') === 'left';
    const names = left
      ? 'line xline pline poly rect arc circle cloud spline ellipse ellarc insert block point hatch grad region table atext addsel'
      : 'erase copyo mirror offset array move rotate scale stretch trim extend breakp breakt join chamfer fillet blend explode';
    const list = names.split(' ').map(n => `<span class="v">${icon(n, 22, 19)}</span>`).join('');
    this.shadowRoot.innerHTML = `
      <style>
        ${ICON_CSS}
        :host { display: block; flex: none; width: ${left ? 32 : 34}px; background: #3b4453; box-sizing: border-box; padding: 0 0 0 ${left ? 5 : 3}px; }
        .bar { width: ${left ? 22 : 24}px; box-sizing: border-box; border: 1px solid #2a303c; background: #384050; display: flex; flex-direction: column; align-items: center; }
        .grip { height: 6px; width: 14px; margin-top: 2px; margin-bottom: 2.4px; background: repeating-linear-gradient(90deg, #9aa1ab 0 1px, transparent 1px 2px) center/100% 3px no-repeat; }
        .v { height: ${left ? 21.25 : 21.2}px; display: flex; align-items: center; justify-content: center; }
      </style>
      <div class="bar"><div class="grip"></div>${list}<div style="height:${left ? 3 : 1}px"></div></div>`;
  }
}

// the drawing itself: same plan twice, the lower one shifted and with axis bubbles
function drawPlan(dx, dy, o) {
  const xs = [188, 363.5, 438.1, 512.7, 585.8, 658.9, 732, 805.2, 878.3, 951.4, 1026, 1100.6, 1170.8, 1241, 1352].map(x => x + dx);
  const Y = (y) => y + dy;
  const [top, band, bot, low] = [224, 242, 397, 400].map(Y);
  const L = xs[0], M1 = xs[1], M2 = xs[11], Rr = xs[14];
  const yel = '#c8c800', grn = '#00c800', red = '#c80000', txt = '#dcdcdc';
  let g = '';
  const ln = (x1, y1, x2, y2, c, w = 1.3, extra = '') => `<line x1="${x1}" y1="${y1}" x2="${x2}" y2="${y2}" stroke="${c}" stroke-width="${w}" ${extra}/>`;
  const T = (t, x, y, w, size, c = txt, extra = '') => `<text x="${x - w / 2}" y="${y}" font-size="${size}" fill="${c}" textLength="${w}" lengthAdjust="spacingAndGlyphs" class="cad" ${extra}>${t}</text>`;

  // hatch, drawn as real lines clipped to the plate: the bands are tighter than the middle part
  const strokes = (from, to, step) => {
    let h = '';
    const height = low - top;
    for (let x = from; x < to + height; x += step) {
      h += `M${x} ${top}L${x - height} ${low}`;
    }
    return h;
  };
  g += `<clipPath id="band${o.id}"><path d="M${L} ${top}H${M1}V${band}H${L + 14.3}V${low}H${L}ZM${M2} ${top}H${Rr}V${band}H${M2}Z"/></clipPath>`;
  g += `<clipPath id="mid${o.id}"><path d="M${M1} ${top}H${M2}V${bot}H${M1}Z"/></clipPath>`;
  g += `<path d="${strokes(L, Rr, 13.3)}" clip-path="url(#band${o.id})" fill="none" stroke="#d8d8d8" stroke-width="1"/>`;
  g += `<path d="${strokes(M1, M2, 18.2)}" clip-path="url(#mid${o.id})" fill="none" stroke="#d8d8d8" stroke-width="1.1"/>`;

  // red centre lines
  const dash = 'stroke-dasharray="27 15.5 1.5 15"';
  xs.forEach(x => {
    g += ln(x, Y(197), x, Y(453), red, 1.2, dash);
  });
  g += ln(L - 41, top - .8, Rr + 37, top - .8, '#e02020', 1.2, 'stroke-dasharray="28 14 2 14"');
  g += ln(L - 41, low, Rr + 37, low, '#e02020', 1.2, 'stroke-dasharray="28 14 2 14"');

  // outline
  g += ln(L, top, Rr, top, '#f0f0f0', 2.4);
  g += `<path d="M${L + 14.3} ${low}V${band}H${M1}V${bot}" fill="none" stroke="#dcdcdc" stroke-width="1.2"/>`;
  g += ln(L + 14.3, low, M1, low, '#d0d0d0', 1.2);
  g += ln(M1, bot, M2, bot, '#f0f0f0', 2.2);
  g += `<path d="M${M2} ${bot}V${band}H${Rr}V${bot}H${M2}" fill="none" stroke="#dcdcdc" stroke-width="1.2"/>`;

  // white column squares with a centre mark
  [M1, M2, Rr].forEach(x => {
    g += `<rect x="${x - 15}" y="${Y(398)}" width="30" height="31" fill="#f4f4f4"/><rect x="${x - .8}" y="${Y(414.5)}" width="1.6" height="1.6" fill="#d00000"/>`;
  });

  // top dimension chain
  const dimY = Y(153);
  const extTop = o.bubbles ? Y(79) : 128;
  [0, 1, 11, 13, 14].forEach(i => {
    g += ln(xs[i], extTop, xs[i], Y(199), yel);
  });
  [3, 5, 7, 9].forEach(i => {
    g += ln(xs[i], Y(138), xs[i], Y(182), yel);
  });
  g += ln(L, dimY, xs[9], dimY, yel, 1.5);
  g += ln(xs[9], dimY, xs[11], dimY, grn, 1.5);
  g += ln(xs[11], dimY, Rr, dimY, yel, 1.5);
  [0, 1, 11, 13, 14].forEach(i => {
    g += ln(xs[i] - 4, dimY + 5, xs[i] + 4, dimY - 5, '#ffff00', 3.2);
  });
  [3, 5, 7, 9].forEach(i => {
    g += `<circle cx="${xs[i]}" cy="${dimY}" r="2" fill="#ffff00"/>`;
  });
  g += T('3000', (xs[0] + xs[1]) / 2, Y(147), 52, 26);
  [['2550', 1, 3], ['2500', 3, 5], ['2500', 5, 7], ['2500', 7, 9], ['2550', 9, 11]].forEach(([t, a, b]) => {
    g += T(t, (xs[a] + xs[b]) / 2, Y(147), 43, 23);
  });
  g += T('2400', (xs[11] + xs[13]) / 2, Y(147), 52, 25);
  g += T('1900', (xs[13] + xs[14]) / 2, Y(147), 52, 25);

  // bottom dimension chain
  const gy = Y(481);
  g += ln(L, gy, Rr, gy, grn, 1.5);
  xs.forEach(x => {
    g += ln(x, Y(471), x, Y(496), grn, 1.2) + `<circle cx="${x}" cy="${gy}" r="2" fill="#00ff00"/>`;
  });
  const labels = ['3000', '1275', '1275', '1250', '1250', '1250', '1250', '1250', '1250', '1275', '1275', '1200', '1200', '1900'];
  labels.forEach((t, i) => {
    g += T(t, (xs[i] + xs[i + 1]) / 2, Y(474), i === 0 || i === 13 ? 43 : 42, 23);
  });

  // right dimension
  g += ln(Rr + 37, top, Rr + 69, top, grn, 1.3) + ln(Rr + 37, low, Rr + 69, low, grn, 1.3);
  g += ln(Rr + 54, top, Rr + 54, low, grn, 1.5);
  g += `<circle cx="${Rr + 54}" cy="${top}" r="2" fill="#00ff00"/><circle cx="${Rr + 54}" cy="${low}" r="2" fill="#00ff00"/>`;
  const rx = Rr + 48, ry = Y(311);
  g += `<text x="0" y="0" font-size="25" fill="${txt}" class="cad" textLength="42" lengthAdjust="spacingAndGlyphs" text-anchor="start" transform="translate(${rx} ${ry + 21}) rotate(-90)">3400</text>`;

  // leader and note
  g += `<path d="M${o.lead[0]} ${o.lead[1]}L${o.lead[2]} ${o.lead[3]}H${o.lead[4]}" fill="none" stroke="#c8c8c8" stroke-width="1.1"/>`;
  g += T('5mm', o.note[0] + 20, o.note[1], 42, 25);
  g += `<text x="${o.note[0] + 45}" y="${o.note[1] - 2}" font-size="17" font-weight="500" fill="${txt}" textLength="55" lengthAdjust="spacingAndGlyphs" class="cjk">花纹钢板</text>`;

  // drawing title
  g += `<text x="${o.title[0]}" y="${o.title[1]}" font-size="33" letter-spacing="6" fill="#d0d0d0" textLength="${o.title[2]}" lengthAdjust="spacingAndGlyphs" class="cjk thin">三层连廊钢板布置图</text>`;
  g += `<rect x="${o.ul[0]}" y="${o.ul[1]}" width="${o.ul[2]}" height="5" fill="#fafafa"/><rect x="${o.ul[0]}" y="${o.ul[1] + 8}" width="${o.ul[2]}" height="1.4" fill="#eee"/>`;
  g += `<text x="${o.f3[0]}" y="${o.f3[1]}" font-size="43" fill="#c800c8" textLength="44" lengthAdjust="spacingAndGlyphs" class="cad">F3</text>`;

  // axis bubbles, lower plan only
  if (o.bubbles) {
    [[0, ''], [1, '42'], [11, '44'], [13, ''], [14, '46']].forEach(([i, t]) => {
      g += `<ellipse cx="${xs[i]}" cy="695" rx="23.8" ry="23.6" fill="#000" stroke="${yel}" stroke-width="1.4"/>`;
      if (t) g += T(t, xs[i], 708, 26, 35, '#e6e6e6');
    });
    g += ln(L, 747, Rr, 747, yel, 1.5);
    g += ln(L - 4, 752, L + 4, 742, '#ffff00', 3.2) + ln(Rr - 4, 752, Rr + 4, 742, '#ffff00', 3.2);
    g += T('19900', 814, 740, 62, 26);
    g += `<text x="750" y="831" font-size="16" fill="${txt}" class="cad">ZZ</text><text x="783" y="831" font-size="16" fill="${txt}" class="cad">1</text>`;
  }
  return g;
}

class CadCanvas extends CadEl {
  connectedCallback() {
    const upper = drawPlan(0, 0, {
      id: 'a', bubbles: false, lead: [655, 253, 688, 194, 780], note: [693, 185],
      title: [622, 576, 253], ul: [615, 590, 222], f3: [867, 611],
    });
    const lower = drawPlan(43.8, 640, {
      id: 'b', bubbles: true, lead: [700, 898, 735, 833, 824], note: [737, 826],
      title: [666, 1206, 250], ul: [659, 1217, 223], f3: [903, 1247],
    });
    this.shadowRoot.innerHTML = `
      <style>
        :host { display: block; position: relative; background: #000; height: 1173px; }
        svg { display: block; overflow: visible; }
        .cad { font-family: Inter, Roboto, "Liberation Sans", sans-serif; font-weight: 200; }
        .cjk { font-family: "Noto Sans CJK SC", sans-serif; }
        .thin { font-weight: 300; }
        .ucs { font: 300 20px Inter, "Liberation Sans", sans-serif; fill: #d8d8d8; }
      </style>
      <svg width="1534" height="1173" viewBox="32 128 1534 1173">
        ${upper}${lower}
        <path d="M60 1224V1273H110" fill="none" stroke="#e0e0e0" stroke-width="1.2"/>
        <rect x="56" y="1268" width="9" height="9" fill="none" stroke="#d0d0d0" stroke-width="1.2"/>
        <text x="60" y="1221" class="ucs">Y</text>
        <text x="112" y="1273" class="ucs">X</text>
      </svg>
      <slot></slot>`;
  }
}

class CadViewcube extends CadEl {
  connectedCallback() {
    this.shadowRoot.innerHTML = `
      <style>
        :host { display: block; position: absolute; left: 1390px; top: 14px; width: 124px; height: 170px; }
        svg { overflow: visible; display: block; }
        text { font: 18px "Noto Sans CJK SC", sans-serif; fill: #8e8e8e; text-anchor: middle; }
        .pill { position: absolute; left: 35px; top: 152px; width: 55px; height: 16px; border-radius: 4px; background: #6c6c70; border: 1px solid #7e7e82; box-sizing: border-box; color: #4a4a4a; font: 10px "Noto Sans CJK SC", sans-serif; line-height: 14px; padding-left: 4px; letter-spacing: 1px; }
        .pill::after { content: ""; position: absolute; right: 4px; top: 4px; border-left: 4px solid transparent; border-right: 4px solid transparent; border-top: 5px solid #8a8a8e; }
      </style>
      <svg width="124" height="140" viewBox="1422 142 124 140">
        <circle cx="1484" cy="209" r="52" fill="none" stroke="#292929" stroke-width="12"/>
        <rect x="1459" y="184" width="50" height="50" fill="#a6a6a6" stroke="#6e6e6e"/>
        <rect x="1468" y="193" width="32" height="31" fill="#9a9a9a"/>
        <text x="1484" y="217" style="font-size:26px;fill:#6e6e6e">上</text>
        <text x="1484" y="162">北</text>
        <text x="1484" y="272">南</text>
        <text x="1429" y="216">西</text>
        <text x="1538" y="216">东</text>
      </svg>
      <div class="pill">未命名</div>`;
  }
}

class CadCmdline extends CadEl {
  connectedCallback() {
    const hist = ['命令: _textedit', '当前设置: 编辑模式 = Multiple', '选择注释对象或 [放弃(U)/模式(M)]: *取消*'];
    this.shadowRoot.innerHTML = `
      <style>
        ${ICON_CSS}
        :host { display: flex; flex-direction: column; align-items: flex-start; position: absolute; left: 236px; top: 1091px; width: 1061px; height: 81px; }
        .ln { margin-left: 60px; height: 15px; margin-bottom: 4px; padding: 0 2px; background: #4a4a4a; color: #c9c9c9; border-radius: 2px; font: 12px "Liberation Mono", "Noto Sans CJK SC", monospace; line-height: 15px; white-space: pre; }
        .bar { width: 100%; height: 25px; display: flex; align-items: stretch; margin-top: -1px; }
        .tools { width: 54px; background: #232935; border-radius: 4px 0 0 4px; display: flex; align-items: center; color: #c9ced4; flex: none; font: 13px "Liberation Sans", sans-serif; }
        .input { flex: 1; background: #adadad; border-top: 1px solid #d0d0d0; display: flex; align-items: center; color: #6f6f6f; font: italic 12px "Noto Sans CJK SC", sans-serif; }
        .up { width: 0; height: 0; border-left: 4px solid transparent; border-right: 4px solid transparent; border-bottom: 5px solid #555; margin: 0 6px 0 auto; }
      </style>
      ${hist.map(h => `<div class="ln">${h}</div>`).join('')}
      <div class="bar">
        <div class="tools">${handle(8)}<span style="margin-left:1px;width:16px;text-align:center">X</span>
          <svg width="18" height="20" viewBox="0 0 18 20" style="margin-left:5px"><path d="M3 19l7-10 5-6M8 6l7 7" fill="none" stroke="#c9ced4" stroke-width="2.2"/></svg>
        </div>
        <div class="input">
          <svg width="28" height="18" viewBox="0 0 28 18" style="margin:0 5px 0 3px"><rect x="1" y="2" width="15" height="14" fill="none" stroke="#444" stroke-width="1.3"/><path d="M1 5h15M4 10l2 2-2 2M8 14h4" fill="none" stroke="#444" stroke-width="1.2"/><path d="M19 7h7l-3.5 5z" fill="#444"/></svg>
          键入命令
          <span class="up"></span>
        </div>
      </div>`;
  }
}

class CadStatusbar extends CadEl {
  connectedCallback() {
    const it = (n, w = 24, ml = 0) => icon(n, w, 17, ml);
    const on = (n, w, ml = 0) => `<span class="on" style="width:${w}px;margin-left:${ml}px">${icon(n, w, 17)}</span>`;
    this.shadowRoot.innerHTML = `
      <style>
        ${ICON_CSS}
        :host { display: flex; flex: none; height: 32px; background: #222833; border-top: 1px solid #3a4250; border-bottom: 2px solid #0b8fd8; box-sizing: border-box; color: #d6d9de; font-size: 12px; position: relative; }
        .tabs { position: absolute; left: 15px; top: 0; height: 20px; display: flex; gap: 3px; align-items: stretch; }
        .tab { width: 46px; text-align: center; background: #2d3442; line-height: 18px; clip-path: polygon(0 0, 100% 0, calc(100% - 5px) 100%, 5px 100%); color: #aeb4bc; }
        .tab.act { background: #3b4453; color: #f0f0f0; font-weight: 700; width: 48px; }
        .tab.pl { width: 26px; margin-left: 3px; }
        .st { position: absolute; left: 361px; top: 1px; height: 24px; display: flex; gap: 2px; }
        .g { background: #3b4453; display: flex; align-items: stretch; height: 100%; flex: none; }
        .on { background: #5c92c8; display: block; height: 100%; flex: none; }
        .coord { width: 204px; box-sizing: border-box; justify-content: flex-end; padding-right: 5px; line-height: 24px; font-family: "Open Sans", sans-serif; font-size: 12px; letter-spacing: -.2px; white-space: nowrap; color: #e6e8eb; }
        .tx { line-height: 24px; white-space: nowrap; }
      </style>
      <div class="tabs"><div class="tab act">模型</div><div class="tab">布局1</div><div class="tab">布局2</div><div class="tab pl">+</div></div>
      <div class="st">
        <div class="g coord">494817.0604, 561228.0528, 0.0000</div>
        <div class="g tx" style="width:30px;justify-content:center">模型</div>
        <div class="g" style="width:64px">${it('grid', 24)}${it('snap', 24)}${dd(14)}</div>
        <div class="g" style="width:326px">${it('infer', 23)}${on('dyn', 21, 3)}${it('ortho', 24)}${it('polar', 24)}${dd(16)}${it('osnap', 24)}${dd(16)}${it('angle', 18)}${on('ucsbox', 20, 7)}${dd(18)}${it('lwt', 24)}${on('transp', 19, 1)}${it('qsel', 32)}${it('selcyc', 18)}${dd(18)}</div>
        <div class="g" style="width:102px">${it('ucsmove', 22)}${it('gizmo', 24, 3)}${dd(12)}${on('cube3', 21, 4)}${dd(16)}</div>
        <div class="g" style="width:143px">${on('anno', 22, 1)}${it('anno2', 26)}${it('anno3', 20)}<span class="tx" style="margin-left:8px;width:52px;letter-spacing:-.4px;">1:1 / 100%</span>${dd(14)}</div>
        <div class="g" style="width:40px">${it('gear', 24)}${dd(16)}</div>
        <div class="g" style="width:20px">${it('plus', 20)}</div>
        <div class="g" style="width:96px">${it('ruler', 28)}<span class="tx" style="margin-left:3px;width:51px">小数</span>${dd(14)}</div>
        <div class="g" style="width:22px">${it('qprop', 22)}</div>
        <div class="g" style="width:40px">${it('lockui', 26, 2)}${dd(8)}</div>
        <div class="g" style="width:22px">${it('isolate', 22)}</div>
        <div class="g" style="width:27px">${on('hwacc', 23, 3)}</div>
        <div class="g" style="width:24px">${it('clean2', 24)}</div>
        <div class="g" style="width:20px">${it('fullsc', 20)}</div>
        <div class="g" style="width:22px">${it('menu', 22)}</div>
      </div>`;
  }
}

// watermark and logo lie over everything, this is what the site printed on the shot
class CadOverlay extends CadEl {
  connectedCallback() {
    const spots = [[153, 245], [689, 245], [1245, 245], [-2, 614], [544, 604], [1100, 614], [1660, 584], [398, 971], [949, 972], [1500, 972]];
    const marks = spots.map(([x, y]) =>
      `<text transform="translate(${x} ${y}) rotate(-45)" text-anchor="middle" class="wm">知末网www.znzmo.com</text>`).join('');
    this.shadowRoot.innerHTML = `
      <style>
        :host { display: block; position: absolute; left: 0; top: 0; width: 1600px; height: 1333px; pointer-events: none; }
        .wm { font: 700 34px "Liberation Sans", "Noto Sans CJK SC", sans-serif; fill: rgba(255,255,255,.14); }
        .logo { font: 500 60px "Noto Sans CJK SC", sans-serif; fill: #cbcbcb; }
        .id { font: 500 34px Roboto, "Liberation Sans", sans-serif; fill: #efefef; }
      </style>
      <svg width="1600" height="1333" viewBox="0 0 1600 1333">
        ${marks}
        <text x="1407" y="1255" class="logo" textLength="124" lengthAdjust="spacingAndGlyphs">知末</text>
        <text x="1361" y="1306" class="id" textLength="227" lengthAdjust="spacingAndGlyphs">ID: 1172218396</text>
      </svg>`;
  }
}

customElements.define('cad-titlebar', CadTitlebar);
customElements.define('cad-menubar', CadMenubar);
customElements.define('cad-doctabs', CadDoctabs);
customElements.define('cad-toolrows', CadToolrows);
customElements.define('cad-workspace', CadWorkspace);
customElements.define('cad-vbar', CadVbar);
customElements.define('cad-canvas', CadCanvas);
customElements.define('cad-viewcube', CadViewcube);
customElements.define('cad-cmdline', CadCmdline);
customElements.define('cad-statusbar', CadStatusbar);
customElements.define('cad-overlay', CadOverlay);
</script>
</body>
</html>
